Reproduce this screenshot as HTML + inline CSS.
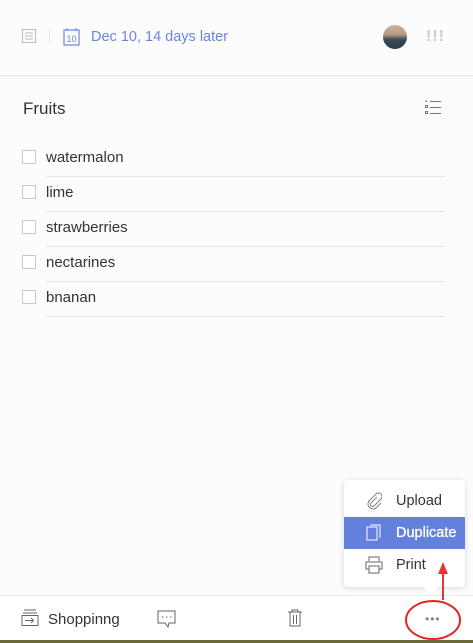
<!DOCTYPE html>
<html><head><style>
body{margin:0;width:473px;height:643px;background:#fcfcfd;font-family:"Liberation Sans",sans-serif;position:relative;overflow:hidden}
.a{position:absolute}
.it{position:absolute;left:0;width:473px;height:35px}
.cb{position:absolute;left:22px;top:8px;width:12px;height:12px;border:1px solid #c8c8c8;background:#fff}
.tx{position:absolute;left:46px;top:7px;font-size:15px;color:#333}
.ln{position:absolute;left:46px;right:28px;top:34px;height:1px;background:#e6e6e6}
</style></head><body>
<svg class="a" style="left:22px;top:29px" width="15" height="15"><rect x="0.5" y="0.5" width="13" height="13" fill="none" stroke="#bbb"/><path d="M3 4h8M3 7h8M3 10h8" stroke="#bbb"/></svg>
<div class="a" style="left:49px;top:29px;width:1px;height:15px;background:#e5e5e5"></div>
<svg class="a" style="left:63px;top:27px" width="18" height="20"><rect x="1" y="3" width="15" height="15" fill="none" stroke="#6a84e0" stroke-width="1.2"/><path d="M4 1v3M13 1v3" stroke="#6a84e0"/><text x="3.5" y="15" font-size="9" fill="#6a84e0" font-family="Liberation Sans">10</text></svg>
<div class="a" style="left:91px;top:29px;font-size:14.5px;color:#6a84e0">Dec 10, 14 days later</div>
<div class="a" style="left:383px;top:25px;width:24px;height:24px;border-radius:50%;background:linear-gradient(#c9b3a0 0%,#b89a80 40%,#3c4c55 60%,#2c3c44 100%)"></div>
<div class="a" style="left:426px;top:28px;font-size:16px;color:#ccc;font-weight:bold;letter-spacing:1px">!!!</div>
<div class="a" style="left:0;top:75px;width:473px;height:1px;background:#e5e5e5"></div>
<div class="a" style="left:23px;top:99px;font-size:17px;color:#333">Fruits</div>
<svg class="a" style="left:425px;top:100px" width="17" height="16"><path d="M5 1.5h11M5 7.5h11M5 13.5h11" stroke="#777"/><rect x="0.5" y="5.5" width="2" height="2" fill="none" stroke="#777"/><rect x="0.5" y="11.5" width="2" height="2" fill="none" stroke="#777"/><rect x="0.5" y="0.5" width="1.5" height="1.5" fill="#777"/></svg>
<div class="it" style="top:142px"><div class="cb"></div><div class="tx">watermalon</div><div class="ln"></div></div>
<div class="it" style="top:177px"><div class="cb"></div><div class="tx">lime</div><div class="ln"></div></div>
<div class="it" style="top:212px"><div class="cb"></div><div class="tx">strawberries</div><div class="ln"></div></div>
<div class="it" style="top:247px"><div class="cb"></div><div class="tx">nectarines</div><div class="ln"></div></div>
<div class="it" style="top:282px"><div class="cb"></div><div class="tx">bnanan</div><div class="ln"></div></div>
<div class="a" style="left:344px;top:480px;width:121px;height:107px;background:#fff;border-radius:4px;box-shadow:0 1px 6px rgba(0,0,0,.15)"></div>
<div class="a" style="left:426px;top:582px;width:10px;height:10px;background:#fff;transform:rotate(45deg)"></div>
<svg class="a" style="left:366px;top:492px" width="16" height="18"><path d="M11 5l-6 6a2 2 0 0 0 3 3l7-7a3.5 3.5 0 0 0-5-5l-7 7a5 5 0 0 0 7 7l5-5" fill="none" stroke="#888" stroke-width="1.1"/></svg>
<div class="a" style="left:396px;top:493px;font-size:14.5px;color:#333">Upload</div>
<div class="a" style="left:344px;top:517px;width:121px;height:32px;background:#6280dc"></div>
<svg class="a" style="left:366px;top:524px" width="16" height="18"><rect x="1" y="3" width="10" height="13" fill="none" stroke="#fff"/><path d="M4 1h10v13" fill="none" stroke="#fff"/></svg>
<div class="a" style="left:396px;top:525px;font-size:14.5px;color:#fff;-webkit-text-stroke:0.3px #fff">Duplicate</div>
<svg class="a" style="left:365px;top:556px" width="18" height="18"><path d="M4 5V1h10v4M4 13H1V6h16v7h-3M4 10h10v7H4z" fill="none" stroke="#666"/></svg>
<div class="a" style="left:396px;top:557px;font-size:14.5px;color:#333">Print</div>
<div class="a" style="left:0;top:595px;width:473px;height:1px;background:#e8e8e8"></div>
<div class="a" style="left:0;top:596px;width:473px;height:44px;background:#fff"></div>
<div class="a" style="left:0;top:640px;width:473px;height:3px;background:#6b6a3a"></div>
<svg class="a" style="left:21px;top:609px" width="18" height="18"><path d="M3 1h12M2 4h14" stroke="#666"/><rect x="1" y="6.5" width="16" height="10" fill="none" stroke="#666"/><path d="M4 11.5h8M10 9l2.5 2.5L10 14" fill="none" stroke="#666"/></svg>
<div class="a" style="left:48px;top:611px;font-size:15px;color:#333">Shoppinng</div>
<svg class="a" style="left:157px;top:610px" width="20" height="20"><path d="M1 1h17v12h-6l-1 4-3-4H1z" fill="none" stroke="#666"/><path d="M5 7h1.5M9 7h1.5M13 7h1.5" stroke="#666"/></svg>
<svg class="a" style="left:287px;top:609px" width="16" height="19"><path d="M1 3h14M5 3V1h6v2M3 3v14h10V3M6.5 6v9M9.5 6v9" fill="none" stroke="#666"/></svg>
<div class="a" style="left:425px;top:612px;font-size:12px;color:#888;letter-spacing:1px">•••</div>
<svg class="a" style="left:405px;top:560px" width="62" height="83"><path d="M38 40v-30" stroke="#e53535" stroke-width="2"/><path d="M33 14l5-12 5 12z" fill="#e53535"/><ellipse cx="28" cy="60" rx="27" ry="19" fill="none" stroke="#e52525" stroke-width="2"/></svg>
</body></html>
